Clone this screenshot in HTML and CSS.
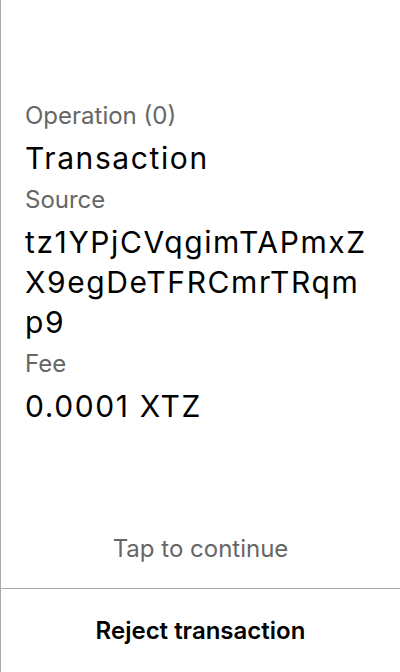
FILE: index.html
```html
<!DOCTYPE html>
<html>
<head>
<meta charset="utf-8">
<link rel="stylesheet" href="styles.css">
</head>
<body>
<div class="screen">
  <div class="content">
    <div class="label">Operation (0)</div>
    <div class="value">Transaction</div>
    <div class="label">Source</div>
    <div class="value">tz1YPjCVqgimTAPmxZX9egDeTFRCmrTRqmp9</div>
    <div class="label">Fee</div>
    <div class="value">0.0001 XTZ</div>
  </div>
  <div class="tap">Tap to continue</div>
  <div class="footer">Reject transaction</div>
</div>
</body>
</html>
```
FILE: styles.css
```css
html, body {
  margin: 0;
  padding: 0;
  background: #fff;
}
.screen {
  box-sizing: border-box;
  width: 400px;
  height: 672px;
  border-left: 1px solid #aaaaaa;
  display: flex;
  flex-direction: column;
  font-family: Inter, "Noto Sans", sans-serif;
  color: #000;
}
.content {
  flex: 1;
  padding: 94px 24px 0 24px;
}
.label {
  font-size: 24px;
  line-height: 44px;
  color: #666;
}
.value {
  font-size: 30px;
  line-height: 40px;
  letter-spacing: 1.6px;
  color: #000;
  word-break: break-all;
}
.tap {
  height: 80px;
  display: flex;
  align-items: center;
  justify-content: center;
  font-size: 24px;
  color: #666;
  border-bottom: 1px solid #aaaaaa;
}
.footer {
  height: 83px;
  display: flex;
  align-items: center;
  justify-content: center;
  font-size: 24px;
  font-weight: 600;
}
```
